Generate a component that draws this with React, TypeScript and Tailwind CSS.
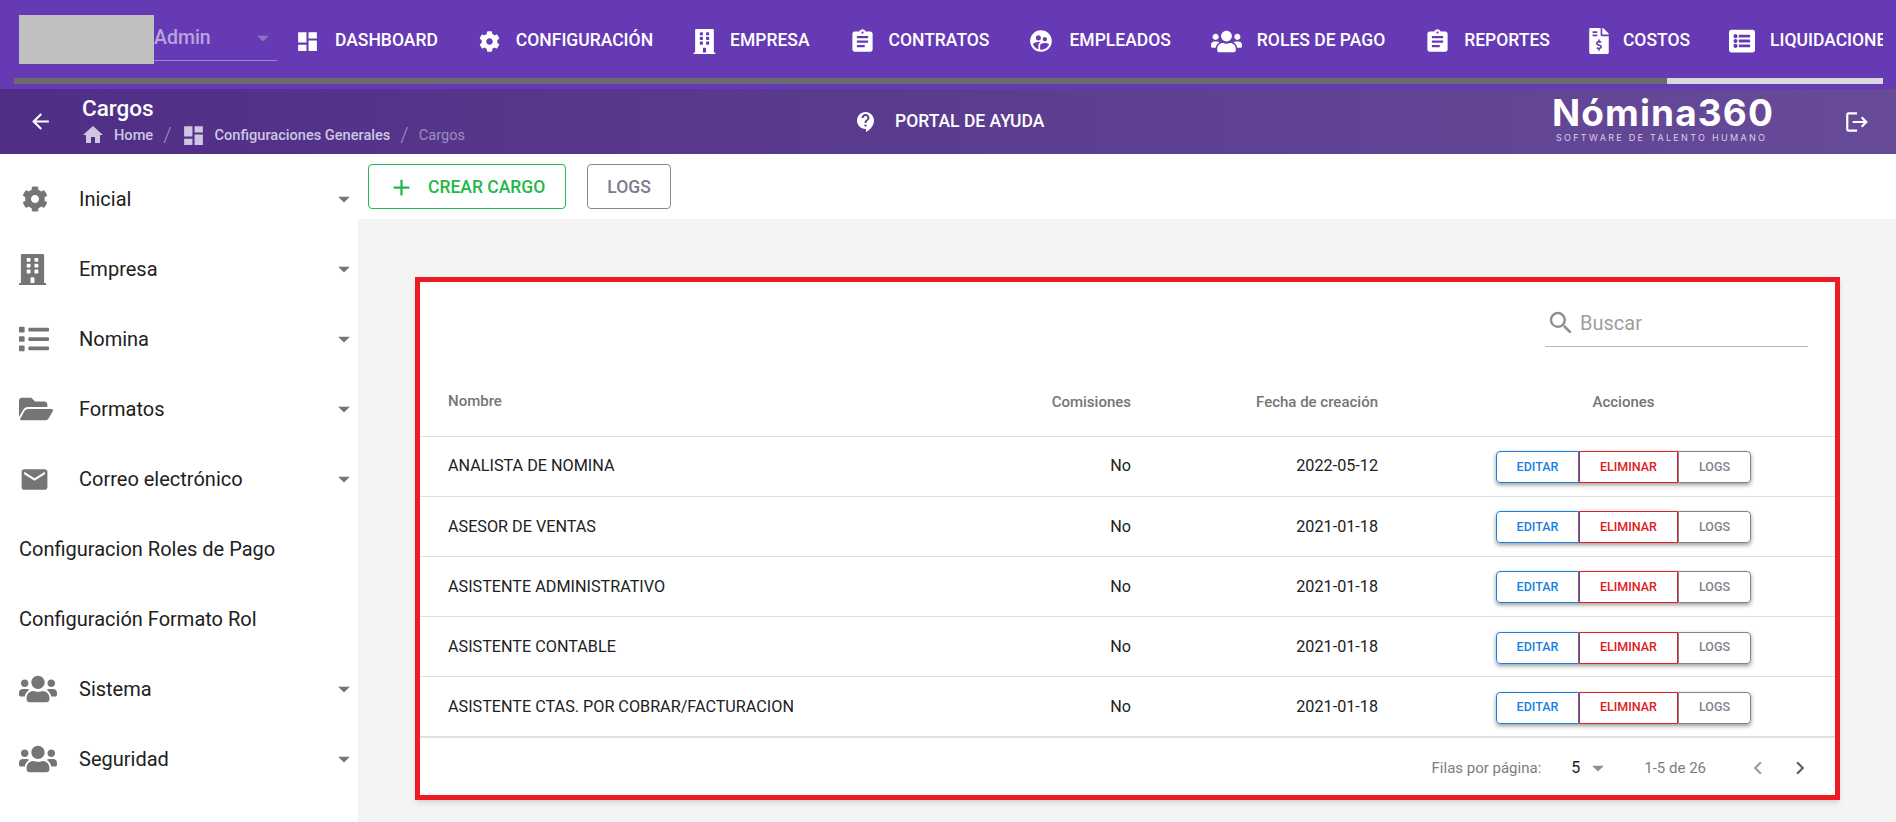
import type { ReactNode } from 'react';
import {
  MdAdd,
  MdArrowBack,
  MdArrowDropDown,
  MdAssignment,
  MdChevronLeft,
  MdChevronRight,
  MdContactSupport,
  MdDashboard,
  MdEmail,
  MdHome,
  MdLogout,
  MdSearch,
  MdSupervisedUserCircle,
} from 'react-icons/md';
import {
  FaBuilding,
  FaCog,
  FaFileInvoiceDollar,
  FaFolderOpen,
  FaList,
  FaListAlt,
  FaUsers,
} from 'react-icons/fa';

const tabs: { label: string; icon: ReactNode; cls: string }[] = [
  { label: 'DASHBOARD', icon: <MdDashboard size={25} className="-mx-[3px]" />, cls: 'gap-[18px]' },
  { label: 'CONFIGURACIÓN', icon: <FaCog size={21} />, cls: 'ml-[41px] gap-[16px]' },
  { label: 'EMPRESA', icon: <FaBuilding size={25} />, cls: 'ml-[39px] gap-[13px]' },
  { label: 'CONTRATOS', icon: <MdAssignment size={27} className="-mx-[3px]" />, cls: 'ml-[42px] gap-[16px]' },
  { label: 'EMPLEADOS', icon: <MdSupervisedUserCircle size={26} className="-mx-[2px]" />, cls: 'ml-[41px] gap-[17px]' },
  { label: 'ROLES DE PAGO', icon: <FaUsers size={31} />, cls: 'ml-[40px] gap-[15px]' },
  { label: 'REPORTES', icon: <MdAssignment size={27} className="-mx-[3px]" />, cls: 'ml-[42px] gap-[16px]' },
  { label: 'COSTOS', icon: <FaFileInvoiceDollar size={26} />, cls: 'ml-[36px] gap-[11px]' },
  { label: 'LIQUIDACIONES', icon: <FaListAlt size={26} />, cls: 'ml-[39px] gap-[15px]' },
];

const menu: { label: string; icon?: ReactNode }[] = [
  { label: 'Inicial', icon: <FaCog size={26} className="ml-[3px]" /> },
  { label: 'Empresa', icon: <FaBuilding size={31} className="-ml-[2px]" /> },
  { label: 'Nomina', icon: <FaList size={30} /> },
  { label: 'Formatos', icon: <FaFolderOpen size={34} /> },
  { label: 'Correo electrónico', icon: <MdEmail size={31} /> },
  { label: 'Configuracion Roles de Pago' },
  { label: 'Configuración Formato Rol' },
  { label: 'Sistema', icon: <FaUsers size={38} /> },
  { label: 'Seguridad', icon: <FaUsers size={38} /> },
];

const rows = [
  { name: 'ANALISTA DE NOMINA', date: '2022-05-12' },
  { name: 'ASESOR DE VENTAS', date: '2021-01-18' },
  { name: 'ASISTENTE ADMINISTRATIVO', date: '2021-01-18' },
  { name: 'ASISTENTE CONTABLE', date: '2021-01-18' },
  { name: 'ASISTENTE CTAS. POR COBRAR/FACTURACION', date: '2021-01-18' },
];

function TopBar() {
  return (
    <div className="h-[89px] shrink-0 bg-[#673ab5] text-white">
      <div className="flex h-[78px]">
        <div className="ml-[19px] mt-[15px] h-[49px] w-[135px] shrink-0 bg-[#c0c0c0]"></div>
        <div className="mt-[15px] flex h-[46px] w-[123px] shrink-0 items-center justify-between border-b border-[#9a86cc] text-[#b7a5dd]">
          <span className="text-[19.5px] font-medium">Admin</span>
          <MdArrowDropDown size={28} className="text-[#8a72c4]" />
        </div>
        <div className="ml-[21px] flex h-full w-[1585px] items-center overflow-hidden pt-[4px]">
          {tabs.map((t) => (
            <div key={t.label} className={`flex shrink-0 items-center ${t.cls}`}>
              {t.icon}
              <span className="text-[17.5px] font-medium leading-none">{t.label}</span>
            </div>
          ))}
        </div>
      </div>
      <div className="ml-[14px] flex h-[6px] w-[1869px] justify-end bg-[#6b6b6b]">
        <div className="h-full w-[216px] bg-[#d9d9d9]"></div>
      </div>
    </div>
  );
}

function SubHeader() {
  return (
    <div className="flex h-[65px] shrink-0 items-center bg-linear-to-r from-[#4f2e86] to-[#674b99] text-white">
      <div className="w-[82px] pl-[28px]">
        <MdArrowBack size={25} />
      </div>
      <div className="w-[772px]">
        <div className="text-[22.5px] font-medium leading-[24px]">Cargos</div>
        <div className="mt-[3px] flex items-center text-[14.6px] font-medium leading-[20px] text-[#cfc6e2]">
          <MdHome size={24} className="-ml-[1px]" />
          <span className="ml-[9px]">Home</span>
          <span className="mx-[10px] text-[21px] font-light text-[#9d8fbb]">/</span>
          <MdDashboard size={25} className="-ml-[1px]" />
          <span className="ml-[9px]">Configuraciones Generales</span>
          <span className="mx-[10px] text-[21px] font-light text-[#9d8fbb]">/</span>
          <span className="font-normal text-[#9d8fbb]">Cargos</span>
        </div>
      </div>
      <div className="flex w-[698px] items-center gap-[17px]">
        <MdContactSupport size={24} />
        <span className="text-[17.5px] font-medium">PORTAL DE AYUDA</span>
      </div>
      <div className="w-[292px] -translate-y-[3px]">
        <div className="font-['Inter',sans-serif] text-[37px] font-bold leading-[38px] tracking-[1.1px]">Nómina360</div>
        <div className="pl-[4px] font-['Inter',sans-serif] text-[9px] leading-[11px] tracking-[2.3px] text-[#d8d0e8]">
          SOFTWARE DE TALENTO HUMANO
        </div>
      </div>
      <MdLogout size={26} />
    </div>
  );
}

function Sidebar() {
  return (
    <aside className="w-[358px] shrink-0 bg-white pt-[10px]">
      {menu.map((m) => (
        <div key={m.label} className="flex h-[70px] items-center text-[20px] text-[#212121]">
          {m.icon ? (
            <>
              <div className="w-[79px] pl-[19px] text-[#757575]">{m.icon}</div>
              <span className="flex-1">{m.label}</span>
              <MdArrowDropDown size={28} className="text-[#757575]" />
            </>
          ) : (
            <span className="pl-[19px]">{m.label}</span>
          )}
        </div>
      ))}
    </aside>
  );
}

function RowActions() {
  return (
    <div className="mx-auto flex h-[32px] w-[255px] rounded-[4px] text-[12.5px] font-medium shadow-[0_2px_4px_rgba(0,0,0,0.4)]">
      <button className="w-[83px] rounded-l-[4px] border border-[#1a7fe0] text-[#1a7fe0]">EDITAR</button>
      <button className="w-[99px] border border-[#e02020] text-[#e02020]">ELIMINAR</button>
      <button className="w-[73px] rounded-r-[4px] border border-[#85808c] text-[#85808c]">LOGS</button>
    </div>
  );
}

function CargosTable() {
  return (
    <div className="h-[523px] border-[5px] border-[#ed1c24] bg-white shadow-md">
      <div className="flex h-[65px] items-end justify-end pr-[27px]">
        <div className="flex h-[50px] w-[263px] items-center gap-[4px] border-b border-[#b8b8b8] pl-[1px] pt-[3px] text-[#9e9e9e]">
          <MdSearch size={30} className="text-[#8f8f8f]" />
          <span className="text-[20px]">Buscar</span>
        </div>
      </div>
      <table className="w-full table-fixed border-collapse">
        <colgroup>
          <col className="w-[500px]" />
          <col className="w-[211px]" />
          <col className="w-[247px]" />
          <col />
        </colgroup>
        <thead>
          <tr className="h-[89px] border-b border-[#e0e0e0] text-[15px] font-medium text-[#757575]">
            <th className="pl-[28px] pt-[20px] text-left font-medium">Nombre</th>
            <th className="pt-[21px] text-right font-medium">Comisiones</th>
            <th className="pt-[21px] text-right font-medium">Fecha de creación</th>
            <th className="pl-[34px] pt-[21px] text-center font-medium">Acciones</th>
          </tr>
        </thead>
        <tbody>
          {rows.map((r) => (
            <tr key={r.name} className="h-[60.2px] border-b border-[#e0e0e0] text-[16.2px] text-[#212121]">
              <td className="pl-[28px] pt-[1px]">{r.name}</td>
              <td className="pt-[1px] text-right">No</td>
              <td className="pt-[1px] text-right">{r.date}</td>
              <td className="pl-[34px] pt-[2px]">
                <RowActions />
              </td>
            </tr>
          ))}
        </tbody>
      </table>
      <div className="flex h-[58px] items-center justify-end border-t border-[#e0e0e0] pr-[22px] pt-[3px] text-[15px] text-[#7d7d7d]">
        <span>Filas por página:</span>
        <span className="ml-[30px] text-[16px] text-[#212121]">5</span>
        <MdArrowDropDown size={28} className="ml-[4px] text-[#8f8f8f]" />
        <span className="ml-[32px]">1-5 de 26</span>
        <MdChevronLeft size={26} className="ml-[39px] text-[#9e9e9e]" />
        <MdChevronRight size={26} className="ml-[16px] text-[#616161]" />
      </div>
    </div>
  );
}

export default function App() {
  return (
    <div className="flex h-screen w-full flex-col overflow-hidden bg-white font-['Roboto',sans-serif]">
      <TopBar />
      <SubHeader />
      <div className="flex min-h-0 flex-1">
        <Sidebar />
        <main className="flex min-w-0 flex-1 flex-col">
          {/* Acciones */}
          <div className="flex h-[65px] shrink-0 gap-[21px] pl-[10px] pt-[10px] text-[17.5px] font-medium">
            <button className="flex h-[45px] w-[198px] items-center rounded-[4px] border border-[#22b84a] pl-[19px] pt-[2px] text-[#22b84a]">
              <MdAdd size={27} />
              <span className="ml-[13px]">CREAR CARGO</span>
            </button>
            <button className="h-[45px] w-[84px] rounded-[4px] border border-[#8a8a8a] pt-[2px] text-[#7c7c8c]">LOGS</button>
          </div>
          <div className="flex-1 bg-[#f4f4f4] pl-[57px] pr-[56px] pt-[58px]">
            <CargosTable />
          </div>
        </main>
      </div>
    </div>
  );
}
